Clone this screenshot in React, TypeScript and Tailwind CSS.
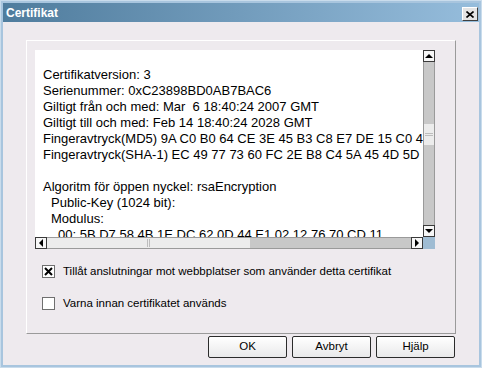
import React from "react";

const lines: { text: string; indent?: number }[] = [
  { text: "" },
  { text: "Certifikatversion: 3" },
  { text: "Serienummer: 0xC23898BD0AB7BAC6" },
  { text: "Giltigt från och med: Mar  6 18:40:24 2007 GMT" },
  { text: "Giltigt till och med: Feb 14 18:40:24 2028 GMT" },
  { text: "Fingeravtryck(MD5) 9A C0 B0 64 CE 3E 45 B3 C8 E7 DE 15 C0 4F" },
  { text: "Fingeravtryck(SHA-1) EC 49 77 73 60 FC 2E B8 C4 5A 45 4D 5D" },
  { text: "" },
  { text: "Algoritm för öppen nyckel: rsaEncryption" },
  { text: "Public-Key (1024 bit):", indent: 8 },
  { text: "Modulus:", indent: 8 },
  { text: "00: 5B D7 58 4B 1E DC 62 0D 44 E1 02 12 76 70 CD 11", indent: 15 }
];

const ScrollButton: React.FC<{ dir: "up" | "down" | "left" | "right" }> = ({
  dir
}) => {
  const tri = {
    up: "border-x-[4px] border-b-[4px] border-x-transparent border-b-black",
    down: "border-x-[4px] border-t-[4px] border-x-transparent border-t-black",
    left: "border-y-[4px] border-r-[4px] border-y-transparent border-r-black",
    right: "border-y-[4px] border-l-[4px] border-y-transparent border-l-black"
  }[dir];
  return (
    <div className="flex h-[12px] w-[12px] shrink-0 items-center justify-center border border-[#3a3a3a] bg-[#f7f7f7]">
      <div className={`h-0 w-0 ${tri}`} />
    </div>
  );
};

const Checkbox: React.FC<{ checked?: boolean; label: string }> = ({
  checked,
  label
}) => (
  <div className="flex items-center gap-[8px]">
    <div className="flex h-[13px] w-[13px] items-center justify-center border border-[#6f6f6f] bg-white">
      {checked && (
        <svg width="9" height="9" viewBox="0 0 9 9">
          <path d="M1 1 L8 8 M8 1 L1 8" stroke="#000" strokeWidth="2" />
        </svg>
      )}
    </div>
    <span className="text-[11.5px] leading-[14px] text-black">{label}</span>
  </div>
);

const DialogButton: React.FC<{ label: string }> = ({ label }) => (
  <button className="flex h-[22px] w-[79px] items-center justify-center rounded-[2px] border border-[#2b2b2b] bg-gradient-to-b from-white to-[#e9e9ea] text-[11.5px] text-black">
    {label}
  </button>
);

export default function App() {
  return (
    <div className="flex h-[368px] w-[482px] flex-col border border-[#c9dcec] bg-[#a8c5de] p-[2px] font-['Liberation_Sans',Arial,sans-serif]">
      {/* 타이틀 바 */}
      <div className="flex h-[19px] items-center justify-between bg-gradient-to-r from-[#4f7c9d] to-[#96bddc] pl-[3px] pr-[1px]">
        <span className="text-[12px] font-bold text-white">Certifikat</span>
        <div className="mt-[3px] flex h-[14px] w-[16px] items-center justify-center border border-b-[#404040] border-l-white border-r-[#404040] border-t-white bg-[#e4e4e4]">
          <svg width="8" height="7" viewBox="0 0 8 7">
            <path d="M0.5 0.5 L7.5 6.5 M7.5 0.5 L0.5 6.5" stroke="#000" strokeWidth="1.6" />
          </svg>
        </div>
      </div>

      {/* 본문 */}
      <div className="flex flex-1 flex-col bg-[#eeeaee] px-[23px] pt-[18px]">
        <div className="flex h-[294px] w-[430px] flex-col border border-b-[#9a9a9a] border-l-white border-r-[#9a9a9a] border-t-white pl-[8px] pt-[9px]">
          {/* 인증서 내용 */}
          <div className="flex h-[199px] w-[400px]">
            <div className="flex w-[388px] flex-col">
              <div className="h-[187px] overflow-hidden bg-white pl-[8px] pt-[1px] text-[13px] leading-[16px] text-black">
                {lines.map((l, i) => (
                  <div
                    key={i}
                    className="h-[16px] whitespace-pre"
                    style={{ paddingLeft: l.indent ?? 0 }}
                  >
                    {l.text}
                  </div>
                ))}
              </div>
              <div className="flex h-[12px] bg-[#c8c8c8]">
                <ScrollButton dir="left" />
                <div className="flex w-[203px] items-center justify-center border-y border-[#9a9a9a] bg-[#ececec]">
                  <div className="h-[8px] w-[3px] border-x border-[#bdbdbd]" />
                </div>
                <div className="flex-1 border-y border-[#9a9a9a]" />
                <ScrollButton dir="right" />
              </div>
            </div>
            <div className="flex w-[12px] flex-col">
              <div className="flex h-[187px] flex-col bg-[#c8c8c8]">
                <ScrollButton dir="up" />
                <div className="h-[62px] border-x border-[#9a9a9a]" />
                <div className="flex h-[21px] flex-col items-center justify-center border-x border-[#9a9a9a] bg-[#ececec]">
                  <div className="h-[3px] w-[8px] border-y border-[#bdbdbd]" />
                </div>
                <div className="flex-1 border-x border-[#9a9a9a]" />
                <ScrollButton dir="down" />
              </div>
              <div className="h-[12px] bg-[#9fbcd3]" />
            </div>
          </div>

          {/* 체크박스 */}
          <div className="mt-[15px] flex flex-col gap-[18px] pl-[7px]">
            <Checkbox
              checked
              label="Tillåt anslutningar mot webbplatser som använder detta certifikat"
            />
            <Checkbox label="Varna innan certifikatet används" />
          </div>
        </div>

        {/* 버튼 */}
        <footer className="mt-[2px] flex justify-end gap-[5px] pr-[1px]">
          <DialogButton label="OK" />
          <DialogButton label="Avbryt" />
          <DialogButton label="Hjälp" />
        </footer>
      </div>
    </div>
  );
}
